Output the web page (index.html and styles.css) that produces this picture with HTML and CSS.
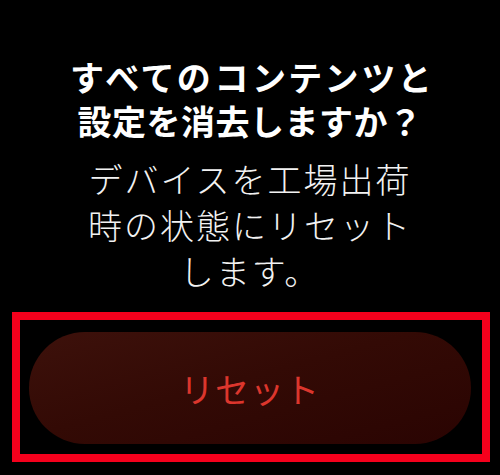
FILE: index.html
```html
<!DOCTYPE html>
<html lang="ja">
<head>
<meta charset="utf-8">
<link rel="stylesheet" href="styles.css">
</head>
<body>
<main class="screen">
  <h1 class="title">
    <span class="line line-a">すべてのコンテンツと</span>
    <span class="line line-b">設定を消去しますか？</span>
  </h1>
  <p class="desc">
    <span class="line">デバイスを工場出荷</span>
    <span class="line">時の状態にリセット</span>
    <span class="line">します。</span>
  </p>
  <div class="highlight">
    <button class="reset">リセット</button>
  </div>
</main>
</body>
</html>
```
FILE: styles.css
```css
html, body {
  margin: 0;
  padding: 0;
  background: #000;
}
body {
  width: 500px;
  height: 475px;
  overflow: hidden;
  font-family: "Noto Sans CJK JP", "Noto Sans", sans-serif;
}
.screen {
  display: flex;
  flex-direction: column;
  align-items: center;
  padding-top: 55px;
}
.title {
  margin: 0;
  color: #fff;
  font-size: 34px;
  font-weight: 700;
  line-height: 44px;
  text-align: center;
}
.line {
  display: block;
  white-space: nowrap;
}
.line-a {
  font-feature-settings: "palt";
  letter-spacing: 5px;
  padding-left: 5px;
}
.line-b {
  letter-spacing: 0.5px;
}
.desc {
  margin: 13px 0 0;
  color: #f2f2f2;
  font-size: 34px;
  font-weight: 300;
  line-height: 46px;
  letter-spacing: 2px;
  text-align: center;
}
.highlight {
  box-sizing: border-box;
  align-self: flex-start;
  margin: 18px 0 0 12px;
  width: 478px;
  height: 150px;
  border: 8px solid #f5001c;
  padding: 12px 10px 10px 9px;
}
.reset {
  display: flex;
  align-items: center;
  justify-content: center;
  width: 442px;
  height: 112px;
  border: none;
  border-radius: 56px;
  background: linear-gradient(165deg, #3d110b 0%, #330a05 45%, #2a0402 100%);
  color: #dc362d;
  font-family: "Noto Sans CJK JP", "Noto Sans", sans-serif;
  font-size: 34px;
  font-weight: 400;
  letter-spacing: 1px;
  padding: 0;
}
```
